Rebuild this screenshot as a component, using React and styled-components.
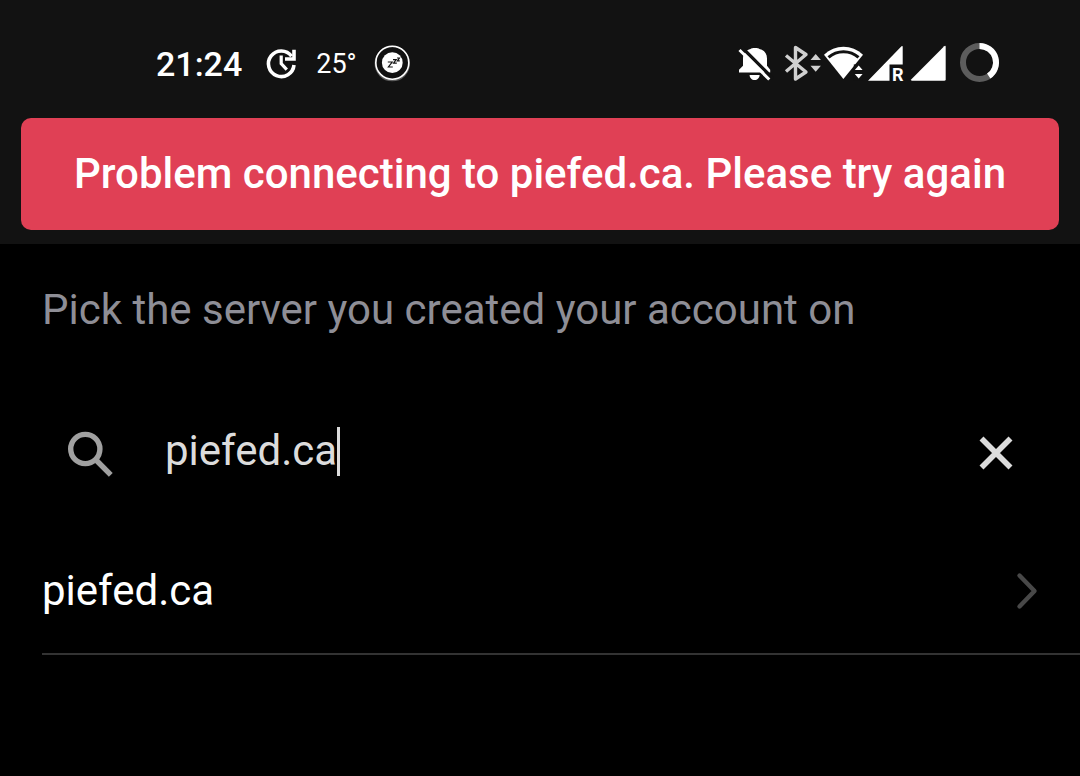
import React from 'react';
import styled, { createGlobalStyle } from 'styled-components';

const COLORS = {
  background: '#000000',
  header: '#121212',
  danger: '#e04055',
  white: '#ffffff',
  inputText: '#dcdcdc',
  muted: '#8e8e96',
  gray300: '#d0d0d0',
  gray400: '#a0a0a0',
  gray600: '#5c5c5c',
  gray700: '#484848',
  divider: '#333333',
};

const SERVERS = ['piefed.ca', 'lemmy.world', 'lemmy.zip'];

const App = () => {
  const [query, setQuery] = React.useState('piefed.ca');
  const results = SERVERS.filter((server) => query && server.includes(query));

  return (
    <>
      <GlobalStyle />
      <Header>
        <StatusBar />
        <Toast role="alert">
          Problem connecting to piefed.ca. Please try again
        </Toast>
      </Header>
      <Main>
        <Hint htmlFor="server-search">
          Pick the server you created your account on
        </Hint>
        <SearchBar>
          <SearchIcon />
          <Field>
            <SearchInput
              id="server-search"
              type="text"
              size={1}
              value={query}
              onChange={(event) => setQuery(event.target.value)}
            />
            <Caret />
          </Field>
          <ClearButton
            type="button"
            aria-label="Clear"
            onClick={() => setQuery('')}
          >
            <CloseIcon />
          </ClearButton>
        </SearchBar>
        <ServerList>
          {results.map((server) => (
            <li key={server}>
              <ServerButton type="button">
                {server}
                <ChevronIcon />
              </ServerButton>
            </li>
          ))}
        </ServerList>
      </Main>
    </>
  );
};

const StatusBar = () => (
  <StatusWrapper>
    <StatusGroup $gap={18}>
      <Time>21:24</Time>
      <UpdateIcon />
      <Temperature>25°</Temperature>
      <SleepIcon />
    </StatusGroup>
    <StatusGroup $gap={4}>
      <BellOffIcon />
      <BluetoothIcon />
      <WifiIcon />
      <RoamingSignalIcon />
      <SignalIcon />
      <BatteryIcon />
    </StatusGroup>
  </StatusWrapper>
);

const Icon = ({ width = 48, height = 48, children }) => (
  <Svg
    width={width}
    height={height}
    viewBox={`0 0 ${width} ${height}`}
    fill="none"
    aria-hidden
  >
    {children}
  </Svg>
);

const UpdateIcon = () => (
  <Icon width={38}>
    <path
      d="M34 25A12.8 12.8 0 1 1 31.6 16.2"
      stroke={COLORS.white}
      strokeWidth="3.6"
    />
    <path d="M34 9.8v9.2H25" stroke={COLORS.white} strokeWidth="3.6" />
    <path d="M21.2 15.6v8l5.6 6" stroke={COLORS.white} strokeWidth="3.2" />
  </Icon>
);

const SleepIcon = () => (
  <Icon width={36}>
    <circle cx="17.3" cy="23.6" r="17" stroke={COLORS.gray600} strokeWidth="1.5" />
    <circle cx="17.3" cy="22.7" r="16.5" stroke={COLORS.white} strokeWidth="1.6" />
    <circle cx="17.3" cy="22.7" r="10.4" fill={COLORS.white} />
    <path
      d="M12.8 22h4.4l-3.8 5h4.4M18 19.6h3.2l-2.6 3.6h3.2M22 18h2.4l-2 2.8h2.4"
      stroke={COLORS.header}
      strokeWidth="1.2"
    />
  </Icon>
);

const BellOffIcon = () => (
  <Icon width={42}>
    <path
      fill={COLORS.white}
      d="M3 32.5v-2.7l4-4V18.5c0-5.2 3-8.6 7.6-9.6C15.2 7.7 22.8 7.7 23.4 8.9 28 9.9 31 13.3 31 18.5v7.3l3.2 4v2.7zM13.6 35h10c0 2.9-2.2 5-5 5s-5-2.1-5-5z"
    />
    <path d="M5 6.5L37 38.5" stroke={COLORS.header} strokeWidth="3.2" />
    <path d="M3.5 10L33.3 39.5" stroke={COLORS.white} strokeWidth="3" />
  </Icon>
);

const BluetoothIcon = () => (
  <Icon width={36}>
    <path
      d="M4 15.5L24 32 13.5 39V7.5L24 14.5 4 31.5"
      stroke={COLORS.gray300}
      strokeWidth="3.4"
      strokeLinejoin="round"
    />
    <path
      fill={COLORS.gray300}
      d="M28.5 20l5.2-6 5.2 6zM28.5 25.7h10.4l-5.2 6z"
    />
  </Icon>
);

const WifiIcon = () => (
  <Icon width={40}>
    <path fill={COLORS.white} d="M2 14.8C13 4 30 4 41 14.8L21.4 39z" />
    <path
      d="M6.5 17.4C15 9.8 28 9.8 36.5 17.4"
      stroke={COLORS.header}
      strokeWidth="3"
    />
    <path fill={COLORS.header} d="M31.8 24.4h9v16h-9z" />
    <path
      fill={COLORS.white}
      d="M32.8 30l3.9-4.6 3.9 4.6zM32.8 34h7.8l-3.9 4.6z"
    />
  </Icon>
);

const RoamingSignalIcon = () => (
  <Icon width={40}>
    <path fill={COLORS.white} d="M2 40.7L35.5 6.2q1.2-.8 1.2.6V24.5H23.5v16.2z" />
    <RoamingLetter x="26" y="40.7">R</RoamingLetter>
  </Icon>
);

const SignalIcon = () => (
  <Icon width={46}>
    <path
      fill={COLORS.white}
      d="M1.4 39.2L34.2 6.2q1.5-1 1.5.8v32.2q0 1.5-1.5 1.5H1.8q-1.3-.3-.4-1.5z"
    />
  </Icon>
);

const BatteryIcon = () => (
  <Icon width={40}>
    <circle cx="19.5" cy="22.4" r="16.5" stroke={COLORS.gray600} strokeWidth="6" />
    <path
      d="M19.5 5.9A16.5 16.5 0 0 1 28.7 36.1"
      stroke={COLORS.white}
      strokeWidth="6"
    />
  </Icon>
);

const SearchIcon = () => (
  <Icon>
    <circle cx="19.3" cy="20" r="14.6" stroke={COLORS.gray400} strokeWidth="5.4" />
    <path d="M29.5 30.5L44.8 45.8" stroke={COLORS.gray400} strokeWidth="5.4" />
  </Icon>
);

const CloseIcon = () => (
  <Icon>
    <path
      d="M9.5 9.5L38.5 38.5M38.5 9.5L9.5 38.5"
      stroke={COLORS.inputText}
      strokeWidth="5.6"
    />
  </Icon>
);

const ChevronIcon = () => (
  <Icon width={24}>
    <path
      d="M5.5 8.5L20.5 24 5.5 39.5"
      stroke={COLORS.gray700}
      strokeWidth="4.4"
      strokeLinecap="round"
      strokeLinejoin="round"
    />
  </Icon>
);

const GlobalStyle = createGlobalStyle`
  *, *::before, *::after {
    box-sizing: border-box;
  }
  body {
    margin: 0;
    background-color: ${COLORS.background};
    font-family: Roboto, sans-serif;
    font-size: 42px;
    line-height: 56px;
    color: ${COLORS.white};
  }
  button, input {
    border: none;
    padding: 0;
    background: none;
    font: inherit;
    color: inherit;
  }
`;

const Header = styled.header`
  padding: 40px 21px 14px;
  background-color: ${COLORS.header};
`;

const StatusWrapper = styled.div`
  display: flex;
  justify-content: space-between;
  padding: 0 59px 30px 135px;
`;

const StatusGroup = styled.div`
  display: flex;
  align-items: center;
  gap: ${p => p.$gap}px;
`;

const Time = styled.span`
  font-size: 34px;
  line-height: 48px;
  font-weight: 500;
`;

const Temperature = styled.span`
  font-size: 27px;
  line-height: 48px;
`;

const Svg = styled.svg`
  display: block;
  flex-shrink: 0;
  overflow: visible;
`;

const RoamingLetter = styled.text`
  fill: ${COLORS.white};
  font-size: 18px;
  font-weight: 700;
`;

const Toast = styled.div`
  padding: 28px;
  border-radius: 10px;
  background-color: ${COLORS.danger};
  font-weight: 500;
  text-align: center;
`;

const Main = styled.main`
  padding: 38px 0 0 42px;
`;

const Hint = styled.label`
  display: block;
  color: ${COLORS.muted};
`;

const SearchBar = styled.div`
  display: flex;
  align-items: center;
  margin: 67px 42px 27px 0;
  padding: 18px 18px 18px 24px;
`;

const Field = styled.div`
  display: flex;
  flex: 1;
  align-items: center;
  min-width: 0;
  margin-left: 51px;
  padding-bottom: 4px;
  color: ${COLORS.inputText};
`;

const SearchInput = styled.input`
  field-sizing: content;
  min-width: 1px;
  outline: none;
  caret-color: transparent;
`;

const Caret = styled.span`
  width: 3px;
  height: 49px;
  background-color: ${COLORS.inputText};
`;

const ClearButton = styled.button`
  cursor: pointer;
`;

const ServerList = styled.ul`
  margin: 0;
  padding: 0;
  list-style: none;
`;

const ServerButton = styled.button`
  display: flex;
  justify-content: space-between;
  align-items: center;
  width: 100%;
  padding: 35px 42px 34px 0;
  border-bottom: 2px solid ${COLORS.divider};
  text-align: left;
  cursor: pointer;
`;

export default App;
